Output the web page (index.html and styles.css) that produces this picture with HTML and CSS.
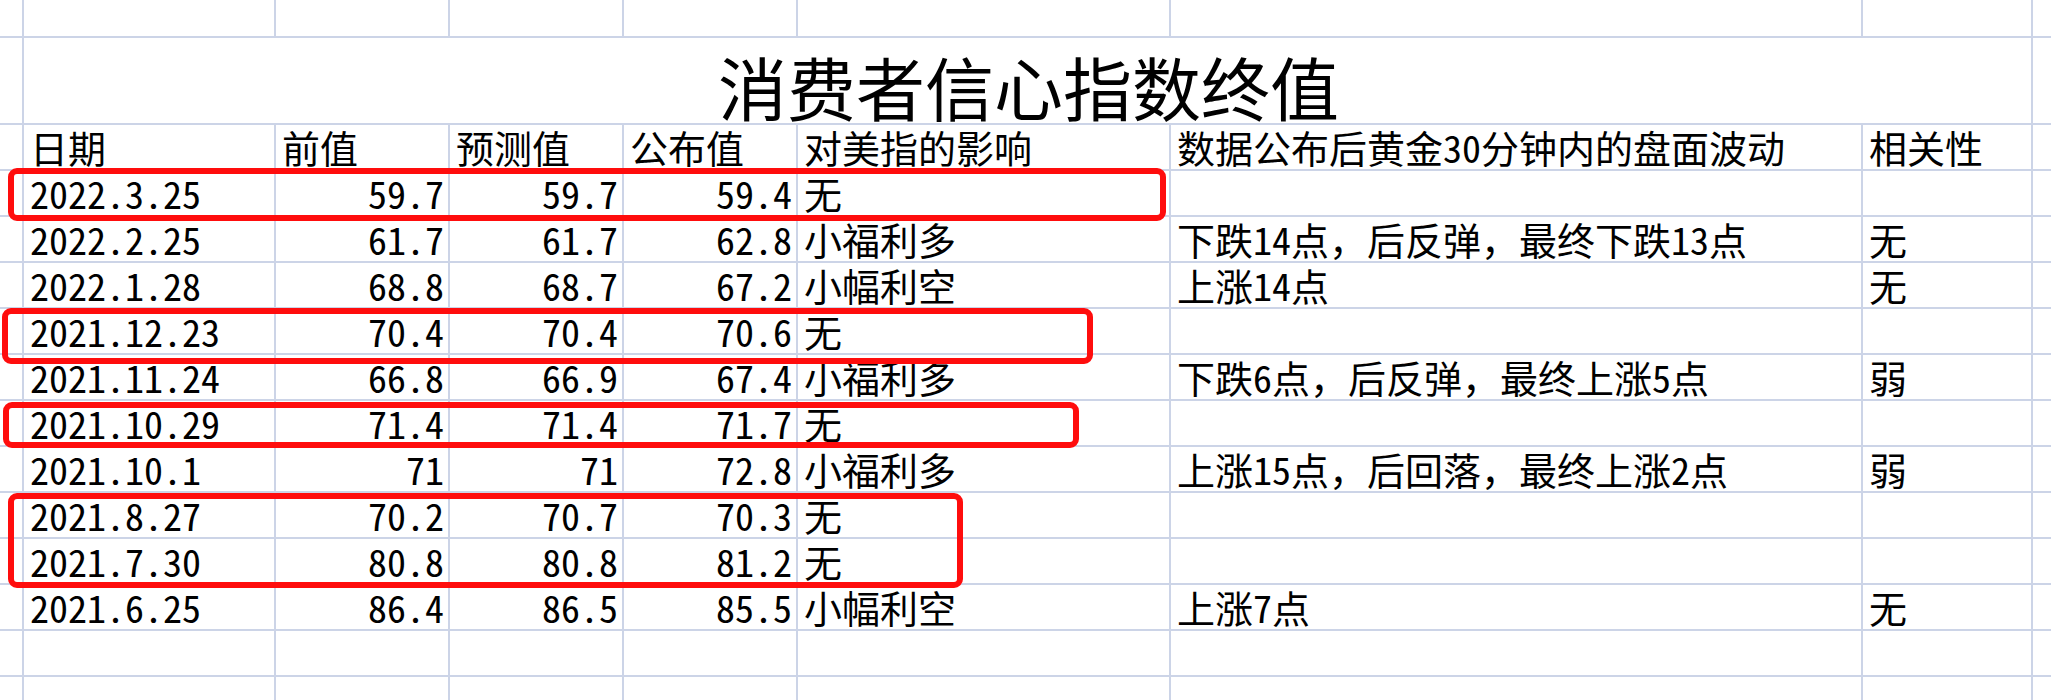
FILE: index.html
```html
<!DOCTYPE html>
<html lang="zh-CN">
<head>
<meta charset="utf-8">
<title>消费者信心指数终值</title>
<link rel="stylesheet" href="styles.css">
</head>
<body>
<div class="sheet">
  <div class="c"></div><div class="c"></div><div class="c"></div><div class="c"></div><div class="c"></div><div class="c"></div><div class="c"></div><div class="c"></div><div class="c"></div>

  <div class="c"></div><div class="c title">消费者信心指数终值</div><div class="c"></div>

  <div class="c"></div><div class="c">日期</div><div class="c">前值</div><div class="c">预测值</div><div class="c">公布值</div><div class="c">对美指的影响</div><div class="c">数据公布后黄金30分钟内的盘面波动</div><div class="c">相关性</div><div class="c"></div>

  <div class="c"></div><div class="c">2022.3.25</div><div class="c n">59.7</div><div class="c n">59.7</div><div class="c n">59.4</div><div class="c">无</div><div class="c"></div><div class="c"></div><div class="c"></div>

  <div class="c"></div><div class="c">2022.2.25</div><div class="c n">61.7</div><div class="c n">61.7</div><div class="c n">62.8</div><div class="c">小福利多</div><div class="c">下跌14点，后反弹，最终下跌13点</div><div class="c">无</div><div class="c"></div>

  <div class="c"></div><div class="c">2022.1.28</div><div class="c n">68.8</div><div class="c n">68.7</div><div class="c n">67.2</div><div class="c">小幅利空</div><div class="c">上涨14点</div><div class="c">无</div><div class="c"></div>

  <div class="c"></div><div class="c">2021.12.23</div><div class="c n">70.4</div><div class="c n">70.4</div><div class="c n">70.6</div><div class="c">无</div><div class="c"></div><div class="c"></div><div class="c"></div>

  <div class="c"></div><div class="c">2021.11.24</div><div class="c n">66.8</div><div class="c n">66.9</div><div class="c n">67.4</div><div class="c">小福利多</div><div class="c">下跌6点，后反弹，最终上涨5点</div><div class="c">弱</div><div class="c"></div>

  <div class="c"></div><div class="c">2021.10.29</div><div class="c n">71.4</div><div class="c n">71.4</div><div class="c n">71.7</div><div class="c">无</div><div class="c"></div><div class="c"></div><div class="c"></div>

  <div class="c"></div><div class="c">2021.10.1</div><div class="c n">71</div><div class="c n">71</div><div class="c n">72.8</div><div class="c">小福利多</div><div class="c">上涨15点，后回落，最终上涨2点</div><div class="c">弱</div><div class="c"></div>

  <div class="c"></div><div class="c">2021.8.27</div><div class="c n">70.2</div><div class="c n">70.7</div><div class="c n">70.3</div><div class="c">无</div><div class="c"></div><div class="c"></div><div class="c"></div>

  <div class="c"></div><div class="c">2021.7.30</div><div class="c n">80.8</div><div class="c n">80.8</div><div class="c n">81.2</div><div class="c">无</div><div class="c"></div><div class="c"></div><div class="c"></div>

  <div class="c"></div><div class="c">2021.6.25</div><div class="c n">86.4</div><div class="c n">86.5</div><div class="c n">85.5</div><div class="c">小幅利空</div><div class="c">上涨7点</div><div class="c">无</div><div class="c"></div>

  <div class="c"></div><div class="c"></div><div class="c"></div><div class="c"></div><div class="c"></div><div class="c"></div><div class="c"></div><div class="c"></div><div class="c"></div>

  <div class="c"></div><div class="c"></div><div class="c"></div><div class="c"></div><div class="c"></div><div class="c"></div><div class="c"></div><div class="c"></div><div class="c"></div>

  <div class="mark m1"></div>
  <div class="mark m2"></div>
  <div class="mark m3"></div>
  <div class="mark m4"></div>
</div>
</body>
</html>
```
FILE: styles.css
```css
html, body {
  margin: 0;
  padding: 0;
  background: #ffffff;
}

.sheet {
  position: relative;
  width: 2051px;
  height: 700px;
  overflow: hidden;
  display: grid;
  grid-template-columns: 22px 250px 172px 172px 172px 371px 690px 168px 18px;
  grid-template-rows: 36px 85px repeat(12, 44px) 23px;
  gap: 2px;
  background: #ccd4e7;
  font-family: "Noto Sans Mono CJK SC", "Noto Sans CJK SC", "Liberation Mono", monospace;
  font-size: 38px;
  font-weight: 300;
  color: #000000;
}

.c {
  background: #ffffff;
  display: flex;
  align-items: flex-end;
  padding: 0 4px 3px 6px;
  line-height: 38px;
  white-space: nowrap;
  min-width: 0;
}

.n {
  justify-content: flex-end;
}

.title {
  grid-column: span 7;
  justify-content: center;
  font-size: 69px;
  line-height: 69px;
  padding-bottom: 2px;
}

.mark {
  position: absolute;
  box-sizing: border-box;
  border: 6px solid #ff0d0d;
  border-radius: 9px;
}

.m1 { left: 8px; top: 168px; width: 1158px; height: 53px; }
.m2 { left: 2px; top: 308px; width: 1091px; height: 56px; }
.m3 { left: 3px; top: 402px; width: 1076px; height: 46px; }
.m4 { left: 8px; top: 493px; width: 955px; height: 95px; }
```
